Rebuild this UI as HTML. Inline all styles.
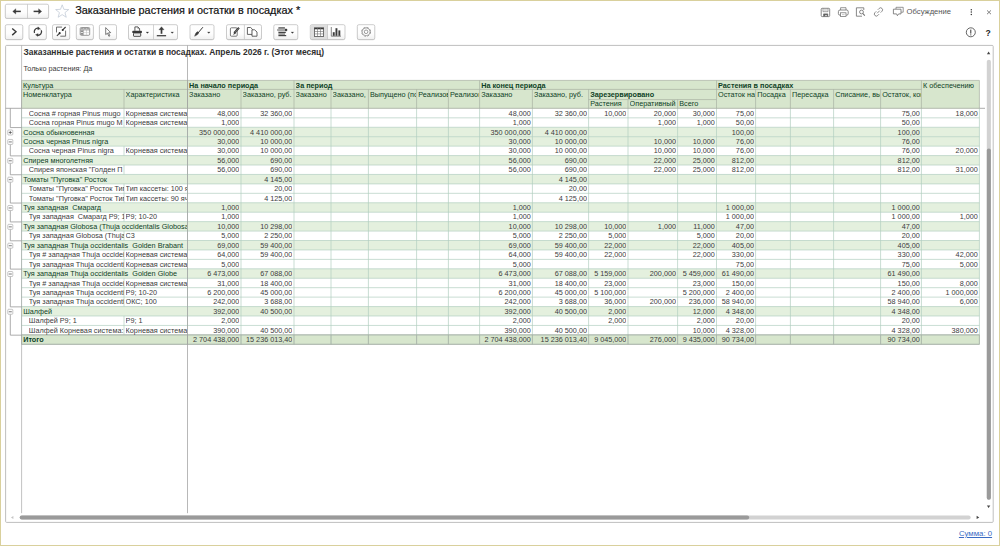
<!DOCTYPE html>
<html lang="ru"><head><meta charset="utf-8"><title>Заказанные растения и остатки в посадках</title>
<style>
html,body{margin:0;padding:0;background:#fff;}
body{width:1000px;height:546px;position:relative;overflow:hidden;font-family:"Liberation Sans",sans-serif;}
#frame{position:absolute;left:0;top:0;width:998px;height:544px;border:1px solid #d9d09c;}
svg{position:absolute;left:0;top:0;}
.t{position:absolute;white-space:pre;overflow:hidden;font-size:7.25px;line-height:8.2px;color:#3c3c3c;}
.t.g{color:#0e4226;}
.t.hd{color:#0e4226;}
.t.b{font-weight:bold;}
.t.r{text-align:right;}
.x{position:absolute;white-space:pre;}
</style></head><body>
<div id="frame"></div>
<svg width="1000" height="546" viewBox="0 0 1000 546">
<defs><linearGradient id="bg" x1="0" y1="0" x2="0" y2="1"><stop offset="0" stop-color="#ffffff"/><stop offset="0.6" stop-color="#fdfdfd"/><stop offset="1" stop-color="#f0f0f0"/></linearGradient></defs>
<rect x="5.30" y="4.90" width="43.30" height="14.20" rx="1.6" fill="#d6d6d6"/>
<rect x="5.30" y="4.20" width="43.30" height="14.20" rx="1.6" fill="url(#bg)" stroke="#c0c0c0" stroke-width="0.8"/>
<line x1="27.50" y1="4.20" x2="27.50" y2="18.40" stroke="#c0c0c0" stroke-width="0.7"/>
<rect x="5.30" y="25.40" width="17.50" height="14.80" rx="1.6" fill="#d6d6d6"/>
<rect x="5.30" y="24.70" width="17.50" height="14.80" rx="1.6" fill="url(#bg)" stroke="#c0c0c0" stroke-width="0.8"/>
<rect x="29.00" y="25.40" width="17.30" height="14.80" rx="1.6" fill="#d6d6d6"/>
<rect x="29.00" y="24.70" width="17.30" height="14.80" rx="1.6" fill="url(#bg)" stroke="#c0c0c0" stroke-width="0.8"/>
<rect x="52.50" y="25.40" width="17.20" height="14.80" rx="1.6" fill="#d6d6d6"/>
<rect x="52.50" y="24.70" width="17.20" height="14.80" rx="1.6" fill="url(#bg)" stroke="#c0c0c0" stroke-width="0.8"/>
<rect x="76.30" y="25.40" width="17.10" height="14.80" rx="1.6" fill="#d6d6d6"/>
<rect x="76.30" y="24.70" width="17.10" height="14.80" rx="1.6" fill="url(#bg)" stroke="#c0c0c0" stroke-width="0.8"/>
<rect x="99.40" y="25.40" width="17.10" height="14.80" rx="1.6" fill="#d6d6d6"/>
<rect x="99.40" y="24.70" width="17.10" height="14.80" rx="1.6" fill="url(#bg)" stroke="#c0c0c0" stroke-width="0.8"/>
<rect x="128.50" y="25.40" width="49.00" height="14.80" rx="1.6" fill="#d6d6d6"/>
<rect x="128.50" y="24.70" width="49.00" height="14.80" rx="1.6" fill="url(#bg)" stroke="#c0c0c0" stroke-width="0.8"/>
<line x1="153.50" y1="24.70" x2="153.50" y2="39.50" stroke="#c0c0c0" stroke-width="0.7"/>
<rect x="190.00" y="25.40" width="24.00" height="14.80" rx="1.6" fill="#d6d6d6"/>
<rect x="190.00" y="24.70" width="24.00" height="14.80" rx="1.6" fill="url(#bg)" stroke="#c0c0c0" stroke-width="0.8"/>
<rect x="226.50" y="25.40" width="35.00" height="14.80" rx="1.6" fill="#d6d6d6"/>
<rect x="226.50" y="24.70" width="35.00" height="14.80" rx="1.6" fill="url(#bg)" stroke="#c0c0c0" stroke-width="0.8"/>
<line x1="244.40" y1="24.70" x2="244.40" y2="39.50" stroke="#c0c0c0" stroke-width="0.7"/>
<rect x="273.80" y="25.40" width="24.00" height="14.80" rx="1.6" fill="#d6d6d6"/>
<rect x="273.80" y="24.70" width="24.00" height="14.80" rx="1.6" fill="url(#bg)" stroke="#c0c0c0" stroke-width="0.8"/>
<rect x="310.30" y="25.40" width="34.70" height="14.80" rx="1.6" fill="#d6d6d6"/>
<rect x="310.30" y="24.70" width="34.70" height="14.80" rx="1.6" fill="url(#bg)" stroke="#c0c0c0" stroke-width="0.8"/>
<rect x="310.70" y="25.10" width="16.80" height="14.00" rx="1.2" fill="#dedede"/>
<line x1="327.50" y1="24.70" x2="327.50" y2="39.50" stroke="#c0c0c0" stroke-width="0.7"/>
<rect x="357.30" y="25.40" width="17.50" height="14.80" rx="1.6" fill="#d6d6d6"/>
<rect x="357.30" y="24.70" width="17.50" height="14.80" rx="1.6" fill="url(#bg)" stroke="#c0c0c0" stroke-width="0.8"/>
<path d="M20.8 11.4 H15" stroke="#3a3a3a" stroke-width="1.5" fill="none" />
<path d="M15.8 8.7 L12.7 11.4 L15.8 14.1 Z" stroke="#3a3a3a" stroke-width="0.3" fill="#3a3a3a" />
<path d="M33.6 11.4 H39.4" stroke="#3a3a3a" stroke-width="1.5" fill="none" />
<path d="M38.6 8.7 L41.7 11.4 L38.6 14.1 Z" stroke="#3a3a3a" stroke-width="0.3" fill="#3a3a3a" />
<polygon points="62.20,4.80 63.90,9.35 68.76,9.57 64.96,12.60 66.26,17.28 62.20,14.60 58.14,17.28 59.44,12.60 55.64,9.57 60.50,9.35" fill="#fff" stroke="#bcc6d2" stroke-width="0.7"/>
<path d="M12.2 28.5 L16 31.8 L12.2 35.1" stroke="#3a3a3a" stroke-width="1.4" fill="none" />
<path d="M34.5 33.1 A3.55 3.55 0 0 1 38.3 28.2" stroke="#3a3a3a" stroke-width="1.3" fill="none" />
<path d="M41.3 30.3 A3.55 3.55 0 0 1 37.5 35.2" stroke="#3a3a3a" stroke-width="1.3" fill="none" />
<path d="M37.9 26.8 L40.4 28.7 L37.7 30 Z" stroke="#3a3a3a" stroke-width="0.2" fill="#3a3a3a" />
<path d="M37.9 36.6 L35.4 34.7 L38.1 33.4 Z" stroke="#3a3a3a" stroke-width="0.2" fill="#3a3a3a" />
<path d="M39.8 28.9 A3.55 3.55 0 0 1 41.2 30.2" stroke="#b0b0b0" stroke-width="1.0" fill="none" />
<path d="M56.5 32.4 V27.1 H62.1 M60.3 36.2 H65.6 V30.6" stroke="#5e5e5e" stroke-width="0.9" fill="none" />
<path d="M65.6 27 L63 29.7" stroke="#3a3a3a" stroke-width="1.1" fill="none" />
<path d="M56.9 35.8 L59.5 33.3" stroke="#3a3a3a" stroke-width="1.1" fill="none" />
<circle cx="62.75" cy="30" r="1.05" fill="#262626"/>
<circle cx="59.65" cy="33.15" r="1.05" fill="#262626"/>
<rect x="80.2" y="27.5" width="9.5" height="7.8" rx="1.1" fill="#fff" stroke="#767676" stroke-width="0.75"/>
<path d="M80.8 28.75 H89.2" stroke="#a2a2a2" stroke-width="1.5" fill="none" />
<path d="M83.6 28 V29.5 M86.6 28 V29.5" stroke="#e0e0e0" stroke-width="0.5" fill="none" />
<rect x="80.7" y="30.4" width="2.3" height="1.8" fill="#8c8c8c"/>
<rect x="80.7" y="33" width="2.3" height="1.8" fill="#8c8c8c"/>
<path d="M86.5 30 V35.1 M83.4 32.6 H89.5" stroke="#c6c6c6" stroke-width="0.6" fill="none" />
<path d="M80.3 30 H89.6 M83.4 29.8 V35.2" stroke="#8a8a8a" stroke-width="0.6" fill="none" />
<path d="M105.7 27.6 L105.7 34.6 L107.4 33.2 L108.9 36.3 L109.9 35.8 L108.5 32.8 L110.7 32.6 Z" stroke="#444" stroke-width="0.7" fill="#fff" />
<path d="M134.9 30.8 V26.9 H137.8 L139.6 28.6 V30.8" stroke="#333" stroke-width="0.8" fill="#fff" />
<path d="M137.8 26.9 V28.6 H139.6" stroke="#555" stroke-width="0.5" fill="none" />
<rect x="132.3" y="30.7" width="9.6" height="2.4" rx="0.7" fill="#383838"/>
<rect x="133.5" y="33" width="7.2" height="3.3" rx="0.5" fill="#fff" stroke="#333" stroke-width="0.9"/>
<path d="M134.4 34.8 H139.8" stroke="#bbb" stroke-width="0.6" fill="none" />
<path d="M146.05 31.900000000000002 H148.75 L147.4 33.4 Z" stroke="#3a3a3a" stroke-width="0.2" fill="#3a3a3a" />
<path d="M170.85 31.900000000000002 H173.54999999999998 L172.2 33.4 Z" stroke="#3a3a3a" stroke-width="0.2" fill="#3a3a3a" />
<path d="M207.45000000000002 31.900000000000002 H210.15 L208.8 33.4 Z" stroke="#3a3a3a" stroke-width="0.2" fill="#3a3a3a" />
<path d="M291.04999999999995 31.900000000000002 H293.75 L292.4 33.4 Z" stroke="#3a3a3a" stroke-width="0.2" fill="#3a3a3a" />
<path d="M161.5 33.8 V29" stroke="#3a3a3a" stroke-width="1.7" fill="none" />
<path d="M158.9 29.8 L161.5 26.7 L164.1 29.8 Z" stroke="#3a3a3a" stroke-width="0.3" fill="#3a3a3a" />
<path d="M156.8 35.7 H166.1" stroke="#444" stroke-width="1.3" fill="none" />
<path d="M202.9 27.2 L198 33" stroke="#3a3a3a" stroke-width="1.0" fill="none" />
<path d="M198.9 32.6 C198.4 34.6 196.6 35.6 194.5 36.3 C195.2 34.6 195.6 32.6 197.5 31.6 Z" stroke="#3a3a3a" stroke-width="0.3" fill="#3a3a3a" />
<rect x="230.4" y="27.8" width="6.8" height="8.4" rx="1" fill="#fff" stroke="#555" stroke-width="0.8"/>
<path d="M239 27.8 L234.2 33" stroke="#3a3a3a" stroke-width="2.0" fill="none" />
<path d="M234.6 32.4 L233.4 34.6 L235.6 33.6 Z" stroke="#3a3a3a" stroke-width="0.3" fill="#3a3a3a" />
<path d="M238.6 28.4 L235 32.2" stroke="#aaa" stroke-width="0.5" fill="none" />
<path d="M247.4 27.5 H250.6 L252.4 29.2 V34.4 H247.4 Z" stroke="#484848" stroke-width="0.85" fill="#fff" />
<path d="M252 29.8 H254.6 L257 32 V36.2 H252 Z" stroke="#484848" stroke-width="0.85" fill="#fff" />
<path d="M278.4 27.9 H284.9" stroke="#444" stroke-width="1.2" fill="none" />
<rect x="277.5" y="28.9" width="9.6" height="2.1" rx="0.8" fill="#b8b8b8" stroke="#6a6a6a" stroke-width="0.5"/>
<rect x="285" y="29.1" width="2" height="1.7" fill="#2e2e2e"/>
<path d="M278.4 32.5 H285.8" stroke="#444" stroke-width="1.2" fill="none" />
<path d="M278.4 34.05 H285" stroke="#6a6a6a" stroke-width="1.2" fill="none" />
<path d="M278.4 35.6 H286.2" stroke="#444" stroke-width="1.2" fill="none" />
<rect x="314.4" y="27.8" width="9.2" height="8.6" fill="#fff" stroke="#505050" stroke-width="0.8"/>
<path d="M314.4 28.6 H323.6" stroke="#3a3a3a" stroke-width="1.4" fill="none" />
<path d="M314.4 31.5 H323.6 M314.4 33.9 H323.6 M317.5 28 V36.4 M320.5 28 V36.4" stroke="#707070" stroke-width="0.6" fill="none" />
<path d="M331.3 27 V36.2 H341" stroke="#555" stroke-width="0.7" fill="none" />
<rect x="332.8" y="32.2" width="1.9" height="3.6" fill="#3c3c3c"/>
<rect x="335.5" y="28.2" width="1.9" height="7.6" fill="#3c3c3c"/>
<rect x="338.4" y="30.4" width="1.9" height="5.4" fill="#3c3c3c"/>
<circle cx="366.1" cy="31.8" r="4.4" fill="none" stroke="#707070" stroke-width="0.8" stroke-dasharray="2.25 1.2"/>
<circle cx="366.1" cy="31.8" r="3.9" fill="#fff" stroke="#777" stroke-width="0.6"/>
<circle cx="366.1" cy="31.8" r="1.8" fill="none" stroke="#707070" stroke-width="0.7"/>
<rect x="821.2" y="8.3" width="8.5" height="8.3" rx="1" fill="#fff" stroke="#6a6a6a" stroke-width="0.8"/>
<path d="M823 8.5 V11.7 H828 V8.5" stroke="#6a6a6a" stroke-width="0.6" fill="none" />
<path d="M824.4 8.8 V11.2 M825.6 8.8 V11.2 M826.8 8.8 V11.2" stroke="#aaa" stroke-width="0.5" fill="none" />
<path d="M823.6 16.4 V13.9 H827.8 V16.4" stroke="#555" stroke-width="0.6" fill="#666" />
<path d="M825.4 15 H826.6 V16 H825.4 Z" stroke="#fff" stroke-width="0.1" fill="#fff" />
<path d="M840.6 10 V7.7 H846 V10" stroke="#6a6a6a" stroke-width="0.7" fill="none" />
<rect x="838.4" y="10" width="9.8" height="5.2" rx="1.6" fill="#fff" stroke="#6a6a6a" stroke-width="0.8"/>
<rect x="840.6" y="12.8" width="5.4" height="3.7" fill="#fff" stroke="#6a6a6a" stroke-width="0.7"/>
<path d="M842 14.6 H844.6" stroke="#999" stroke-width="0.5" fill="none" />
<path d="M863.8 10 V7.8 H856.4 V16.2 H862" stroke="#6a6a6a" stroke-width="0.8" fill="none" />
<circle cx="861.5" cy="12" r="1.9" fill="#fff" stroke="#6a6a6a" stroke-width="0.8"/>
<path d="M862.9 13.5 L864.8 15.7" stroke="#6a6a6a" stroke-width="1.1" fill="none" />
<g transform="translate(878.45 11.95) rotate(-45)" fill="none" stroke="#777" stroke-width="0.8"><path d="M1.1 -2 H3 A2 2 0 0 1 3 2 H1.1"/><path d="M-1.1 -2 H-3 A2 2 0 0 0 -3 2 H-1.1"/><path d="M-1.8 0 H1.8"/></g>
<path d="M896 9 V7.3 H903.2 V12.2 H901.2" stroke="#6a6a6a" stroke-width="0.7" fill="none" />
<path d="M893.4 9.2 H901 V13.9 H898.6 L897.4 15.7 L896.6 13.9 H893.4 Z" stroke="#6a6a6a" stroke-width="0.8" fill="#fff" />
<circle cx="971.3" cy="9.8" r="0.75" fill="#3a3a3a"/>
<circle cx="971.3" cy="12.1" r="0.75" fill="#3a3a3a"/>
<circle cx="971.3" cy="14.4" r="0.75" fill="#3a3a3a"/>
<path d="M987 10.4 L991 14.2 M991 10.4 L987 14.2" stroke="#6a6a6a" stroke-width="0.85" fill="none" />
<circle cx="970.8" cy="32.3" r="4.5" fill="#fff" stroke="#333" stroke-width="0.75"/>
<path d="M970.8 29.6 V33.6" stroke="#333" stroke-width="1.0" fill="none" />
<path d="M970.8 34.4 V35.4" stroke="#333" stroke-width="1.0" fill="none" />
<rect x="21.50" y="80.40" width="957.90" height="27.90" fill="#d7e6cd" />
<rect x="21.50" y="127.27" width="957.90" height="9.44" fill="#e4f0de" />
<rect x="21.50" y="136.71" width="957.90" height="9.44" fill="#e4f0de" />
<rect x="21.50" y="155.58" width="957.90" height="9.44" fill="#e4f0de" />
<rect x="21.50" y="174.45" width="957.90" height="9.44" fill="#e4f0de" />
<rect x="21.50" y="202.76" width="957.90" height="9.44" fill="#e4f0de" />
<rect x="21.50" y="221.63" width="957.90" height="9.44" fill="#e4f0de" />
<rect x="21.50" y="240.50" width="957.90" height="9.44" fill="#e4f0de" />
<rect x="21.50" y="268.81" width="957.90" height="9.44" fill="#e4f0de" />
<rect x="21.50" y="306.56" width="957.90" height="9.44" fill="#e4f0de" />
<rect x="21.50" y="334.86" width="957.90" height="9.44" fill="#d7e6cd" />
<line x1="21.50" y1="117.84" x2="979.40" y2="117.84" stroke="#b2cfc0" stroke-width="0.7" />
<line x1="21.50" y1="127.27" x2="979.40" y2="127.27" stroke="#b2cfc0" stroke-width="0.7" />
<line x1="21.50" y1="136.71" x2="979.40" y2="136.71" stroke="#b2cfc0" stroke-width="0.7" />
<line x1="21.50" y1="146.14" x2="979.40" y2="146.14" stroke="#b2cfc0" stroke-width="0.7" />
<line x1="21.50" y1="155.58" x2="979.40" y2="155.58" stroke="#b2cfc0" stroke-width="0.7" />
<line x1="21.50" y1="165.02" x2="979.40" y2="165.02" stroke="#b2cfc0" stroke-width="0.7" />
<line x1="21.50" y1="174.45" x2="979.40" y2="174.45" stroke="#b2cfc0" stroke-width="0.7" />
<line x1="21.50" y1="183.89" x2="979.40" y2="183.89" stroke="#b2cfc0" stroke-width="0.7" />
<line x1="21.50" y1="193.32" x2="979.40" y2="193.32" stroke="#b2cfc0" stroke-width="0.7" />
<line x1="21.50" y1="202.76" x2="979.40" y2="202.76" stroke="#b2cfc0" stroke-width="0.7" />
<line x1="21.50" y1="212.20" x2="979.40" y2="212.20" stroke="#b2cfc0" stroke-width="0.7" />
<line x1="21.50" y1="221.63" x2="979.40" y2="221.63" stroke="#b2cfc0" stroke-width="0.7" />
<line x1="21.50" y1="231.07" x2="979.40" y2="231.07" stroke="#b2cfc0" stroke-width="0.7" />
<line x1="21.50" y1="240.50" x2="979.40" y2="240.50" stroke="#b2cfc0" stroke-width="0.7" />
<line x1="21.50" y1="249.94" x2="979.40" y2="249.94" stroke="#b2cfc0" stroke-width="0.7" />
<line x1="21.50" y1="259.38" x2="979.40" y2="259.38" stroke="#b2cfc0" stroke-width="0.7" />
<line x1="21.50" y1="268.81" x2="979.40" y2="268.81" stroke="#b2cfc0" stroke-width="0.7" />
<line x1="21.50" y1="278.25" x2="979.40" y2="278.25" stroke="#b2cfc0" stroke-width="0.7" />
<line x1="21.50" y1="287.68" x2="979.40" y2="287.68" stroke="#b2cfc0" stroke-width="0.7" />
<line x1="21.50" y1="297.12" x2="979.40" y2="297.12" stroke="#b2cfc0" stroke-width="0.7" />
<line x1="21.50" y1="306.56" x2="979.40" y2="306.56" stroke="#b2cfc0" stroke-width="0.7" />
<line x1="21.50" y1="315.99" x2="979.40" y2="315.99" stroke="#b2cfc0" stroke-width="0.7" />
<line x1="21.50" y1="325.43" x2="979.40" y2="325.43" stroke="#b2cfc0" stroke-width="0.7" />
<line x1="21.50" y1="334.86" x2="979.40" y2="334.86" stroke="#b2cfc0" stroke-width="0.7" />
<line x1="21.50" y1="344.30" x2="979.40" y2="344.30" stroke="#b2cfc0" stroke-width="0.7" />
<line x1="21.50" y1="108.30" x2="21.50" y2="344.30" stroke="#b2cfc0" stroke-width="0.7" />
<line x1="124.00" y1="108.40" x2="124.00" y2="117.84" stroke="#b2cfc0" stroke-width="0.7" />
<line x1="124.00" y1="117.84" x2="124.00" y2="127.27" stroke="#b2cfc0" stroke-width="0.7" />
<line x1="124.00" y1="146.14" x2="124.00" y2="155.58" stroke="#b2cfc0" stroke-width="0.7" />
<line x1="124.00" y1="165.02" x2="124.00" y2="174.45" stroke="#b2cfc0" stroke-width="0.7" />
<line x1="124.00" y1="183.89" x2="124.00" y2="193.32" stroke="#b2cfc0" stroke-width="0.7" />
<line x1="124.00" y1="193.32" x2="124.00" y2="202.76" stroke="#b2cfc0" stroke-width="0.7" />
<line x1="124.00" y1="212.20" x2="124.00" y2="221.63" stroke="#b2cfc0" stroke-width="0.7" />
<line x1="124.00" y1="231.07" x2="124.00" y2="240.50" stroke="#b2cfc0" stroke-width="0.7" />
<line x1="124.00" y1="249.94" x2="124.00" y2="259.38" stroke="#b2cfc0" stroke-width="0.7" />
<line x1="124.00" y1="259.38" x2="124.00" y2="268.81" stroke="#b2cfc0" stroke-width="0.7" />
<line x1="124.00" y1="278.25" x2="124.00" y2="287.68" stroke="#b2cfc0" stroke-width="0.7" />
<line x1="124.00" y1="287.68" x2="124.00" y2="297.12" stroke="#b2cfc0" stroke-width="0.7" />
<line x1="124.00" y1="297.12" x2="124.00" y2="306.56" stroke="#b2cfc0" stroke-width="0.7" />
<line x1="124.00" y1="315.99" x2="124.00" y2="325.43" stroke="#b2cfc0" stroke-width="0.7" />
<line x1="124.00" y1="325.43" x2="124.00" y2="334.86" stroke="#b2cfc0" stroke-width="0.7" />
<line x1="187.50" y1="108.30" x2="187.50" y2="344.30" stroke="#b2cfc0" stroke-width="0.7" />
<line x1="241.00" y1="108.30" x2="241.00" y2="344.30" stroke="#b2cfc0" stroke-width="0.7" />
<line x1="294.00" y1="108.30" x2="294.00" y2="344.30" stroke="#b2cfc0" stroke-width="0.7" />
<line x1="331.00" y1="108.30" x2="331.00" y2="344.30" stroke="#b2cfc0" stroke-width="0.7" />
<line x1="368.40" y1="108.30" x2="368.40" y2="344.30" stroke="#b2cfc0" stroke-width="0.7" />
<line x1="416.60" y1="108.30" x2="416.60" y2="344.30" stroke="#b2cfc0" stroke-width="0.7" />
<line x1="448.40" y1="108.30" x2="448.40" y2="344.30" stroke="#b2cfc0" stroke-width="0.7" />
<line x1="479.60" y1="108.30" x2="479.60" y2="344.30" stroke="#b2cfc0" stroke-width="0.7" />
<line x1="532.40" y1="108.30" x2="532.40" y2="344.30" stroke="#b2cfc0" stroke-width="0.7" />
<line x1="588.60" y1="108.30" x2="588.60" y2="344.30" stroke="#b2cfc0" stroke-width="0.7" />
<line x1="628.00" y1="108.30" x2="628.00" y2="344.30" stroke="#b2cfc0" stroke-width="0.7" />
<line x1="677.60" y1="108.30" x2="677.60" y2="344.30" stroke="#b2cfc0" stroke-width="0.7" />
<line x1="716.50" y1="108.30" x2="716.50" y2="344.30" stroke="#b2cfc0" stroke-width="0.7" />
<line x1="755.60" y1="108.30" x2="755.60" y2="344.30" stroke="#b2cfc0" stroke-width="0.7" />
<line x1="790.40" y1="108.30" x2="790.40" y2="344.30" stroke="#b2cfc0" stroke-width="0.7" />
<line x1="833.60" y1="108.30" x2="833.60" y2="344.30" stroke="#b2cfc0" stroke-width="0.7" />
<line x1="880.60" y1="108.30" x2="880.60" y2="344.30" stroke="#b2cfc0" stroke-width="0.7" />
<line x1="921.40" y1="108.30" x2="921.40" y2="344.30" stroke="#b2cfc0" stroke-width="0.7" />
<line x1="979.40" y1="108.30" x2="979.40" y2="344.30" stroke="#b2cfc0" stroke-width="0.7" />
<line x1="21.50" y1="334.86" x2="979.40" y2="334.86" stroke="#a9ada6" stroke-width="0.85" />
<line x1="21.50" y1="344.30" x2="979.40" y2="344.30" stroke="#a9ada6" stroke-width="0.85" />
<line x1="21.50" y1="334.86" x2="21.50" y2="344.30" stroke="#a9b0a6" stroke-width="0.75" />
<line x1="187.50" y1="334.86" x2="187.50" y2="344.30" stroke="#a9b0a6" stroke-width="0.75" />
<line x1="241.00" y1="334.86" x2="241.00" y2="344.30" stroke="#a9b0a6" stroke-width="0.75" />
<line x1="294.00" y1="334.86" x2="294.00" y2="344.30" stroke="#a9b0a6" stroke-width="0.75" />
<line x1="331.00" y1="334.86" x2="331.00" y2="344.30" stroke="#a9b0a6" stroke-width="0.75" />
<line x1="368.40" y1="334.86" x2="368.40" y2="344.30" stroke="#a9b0a6" stroke-width="0.75" />
<line x1="416.60" y1="334.86" x2="416.60" y2="344.30" stroke="#a9b0a6" stroke-width="0.75" />
<line x1="448.40" y1="334.86" x2="448.40" y2="344.30" stroke="#a9b0a6" stroke-width="0.75" />
<line x1="479.60" y1="334.86" x2="479.60" y2="344.30" stroke="#a9b0a6" stroke-width="0.75" />
<line x1="532.40" y1="334.86" x2="532.40" y2="344.30" stroke="#a9b0a6" stroke-width="0.75" />
<line x1="588.60" y1="334.86" x2="588.60" y2="344.30" stroke="#a9b0a6" stroke-width="0.75" />
<line x1="628.00" y1="334.86" x2="628.00" y2="344.30" stroke="#a9b0a6" stroke-width="0.75" />
<line x1="677.60" y1="334.86" x2="677.60" y2="344.30" stroke="#a9b0a6" stroke-width="0.75" />
<line x1="716.50" y1="334.86" x2="716.50" y2="344.30" stroke="#a9b0a6" stroke-width="0.75" />
<line x1="755.60" y1="334.86" x2="755.60" y2="344.30" stroke="#a9b0a6" stroke-width="0.75" />
<line x1="790.40" y1="334.86" x2="790.40" y2="344.30" stroke="#a9b0a6" stroke-width="0.75" />
<line x1="833.60" y1="334.86" x2="833.60" y2="344.30" stroke="#a9b0a6" stroke-width="0.75" />
<line x1="880.60" y1="334.86" x2="880.60" y2="344.30" stroke="#a9b0a6" stroke-width="0.75" />
<line x1="921.40" y1="334.86" x2="921.40" y2="344.30" stroke="#a9b0a6" stroke-width="0.75" />
<line x1="979.40" y1="334.86" x2="979.40" y2="344.30" stroke="#a9b0a6" stroke-width="0.75" />
<line x1="21.50" y1="80.40" x2="979.40" y2="80.40" stroke="#a9b2a4" stroke-width="0.7" />
<line x1="21.50" y1="89.40" x2="921.40" y2="89.40" stroke="#a9b2a4" stroke-width="0.7" />
<line x1="588.60" y1="99.55" x2="716.50" y2="99.55" stroke="#a9b2a4" stroke-width="0.7" />
<line x1="21.50" y1="80.40" x2="21.50" y2="108.30" stroke="#a9b2a4" stroke-width="0.7" />
<line x1="979.40" y1="80.40" x2="979.40" y2="108.30" stroke="#a9b2a4" stroke-width="0.7" />
<line x1="187.50" y1="80.40" x2="187.50" y2="108.30" stroke="#a9b2a4" stroke-width="0.7" />
<line x1="294.00" y1="80.40" x2="294.00" y2="108.30" stroke="#a9b2a4" stroke-width="0.7" />
<line x1="479.60" y1="80.40" x2="479.60" y2="108.30" stroke="#a9b2a4" stroke-width="0.7" />
<line x1="716.50" y1="80.40" x2="716.50" y2="108.30" stroke="#a9b2a4" stroke-width="0.7" />
<line x1="921.40" y1="80.40" x2="921.40" y2="108.30" stroke="#a9b2a4" stroke-width="0.7" />
<line x1="124.00" y1="89.40" x2="124.00" y2="108.30" stroke="#a9b2a4" stroke-width="0.7" />
<line x1="241.00" y1="89.40" x2="241.00" y2="108.30" stroke="#a9b2a4" stroke-width="0.7" />
<line x1="331.00" y1="89.40" x2="331.00" y2="108.30" stroke="#a9b2a4" stroke-width="0.7" />
<line x1="368.40" y1="89.40" x2="368.40" y2="108.30" stroke="#a9b2a4" stroke-width="0.7" />
<line x1="416.60" y1="89.40" x2="416.60" y2="108.30" stroke="#a9b2a4" stroke-width="0.7" />
<line x1="448.40" y1="89.40" x2="448.40" y2="108.30" stroke="#a9b2a4" stroke-width="0.7" />
<line x1="532.40" y1="89.40" x2="532.40" y2="108.30" stroke="#a9b2a4" stroke-width="0.7" />
<line x1="588.60" y1="89.40" x2="588.60" y2="108.30" stroke="#a9b2a4" stroke-width="0.7" />
<line x1="755.60" y1="89.40" x2="755.60" y2="108.30" stroke="#a9b2a4" stroke-width="0.7" />
<line x1="790.40" y1="89.40" x2="790.40" y2="108.30" stroke="#a9b2a4" stroke-width="0.7" />
<line x1="833.60" y1="89.40" x2="833.60" y2="108.30" stroke="#a9b2a4" stroke-width="0.7" />
<line x1="880.60" y1="89.40" x2="880.60" y2="108.30" stroke="#a9b2a4" stroke-width="0.7" />
<line x1="628.00" y1="99.55" x2="628.00" y2="108.30" stroke="#a9b2a4" stroke-width="0.7" />
<line x1="677.60" y1="99.55" x2="677.60" y2="108.30" stroke="#a9b2a4" stroke-width="0.7" />
<rect x="5.6" y="45.4" width="987.6" height="477.0" fill="none" stroke="#b4b4b4" stroke-width="0.85" rx="1"/>
<line x1="21.60" y1="45.40" x2="21.60" y2="513.20" stroke="#a8a8a8" stroke-width="0.7" />
<line x1="187.50" y1="45.40" x2="187.50" y2="513.20" stroke="#a0a0a0" stroke-width="0.75" />
<line x1="5.60" y1="108.30" x2="21.50" y2="108.30" stroke="#989898" stroke-width="0.8" />
<line x1="979.40" y1="108.30" x2="985.00" y2="108.30" stroke="#989898" stroke-width="0.8" />
<line x1="21.50" y1="108.30" x2="979.40" y2="108.30" stroke="#a3aa9e" stroke-width="0.8" />
<line x1="10.30" y1="108.30" x2="10.30" y2="127.57" stroke="#989898" stroke-width="0.8" />
<line x1="10.30" y1="127.57" x2="21.60" y2="127.57" stroke="#989898" stroke-width="0.8" />
<rect x="7.80" y="129.99" width="5" height="5" rx="0.8" fill="#fff" stroke="#a0a0a0" stroke-width="0.6"/>
<line x1="8.80" y1="132.49" x2="11.80" y2="132.49" stroke="#444" stroke-width="0.7" />
<line x1="10.30" y1="130.99" x2="10.30" y2="133.99" stroke="#444" stroke-width="0.7" />
<line x1="10.30" y1="144.43" x2="10.30" y2="155.88" stroke="#989898" stroke-width="0.8" />
<line x1="10.30" y1="155.88" x2="21.60" y2="155.88" stroke="#989898" stroke-width="0.8" />
<rect x="7.80" y="139.43" width="5" height="5" rx="0.8" fill="#fff" stroke="#a0a0a0" stroke-width="0.6"/>
<line x1="8.80" y1="141.93" x2="11.80" y2="141.93" stroke="#444" stroke-width="0.7" />
<line x1="10.30" y1="163.30" x2="10.30" y2="174.75" stroke="#989898" stroke-width="0.8" />
<line x1="10.30" y1="174.75" x2="21.60" y2="174.75" stroke="#989898" stroke-width="0.8" />
<rect x="7.80" y="158.30" width="5" height="5" rx="0.8" fill="#fff" stroke="#a0a0a0" stroke-width="0.6"/>
<line x1="8.80" y1="160.80" x2="11.80" y2="160.80" stroke="#444" stroke-width="0.7" />
<line x1="10.30" y1="182.17" x2="10.30" y2="203.06" stroke="#989898" stroke-width="0.8" />
<line x1="10.30" y1="203.06" x2="21.60" y2="203.06" stroke="#989898" stroke-width="0.8" />
<rect x="7.80" y="177.17" width="5" height="5" rx="0.8" fill="#fff" stroke="#a0a0a0" stroke-width="0.6"/>
<line x1="8.80" y1="179.67" x2="11.80" y2="179.67" stroke="#444" stroke-width="0.7" />
<line x1="10.30" y1="210.48" x2="10.30" y2="221.93" stroke="#989898" stroke-width="0.8" />
<line x1="10.30" y1="221.93" x2="21.60" y2="221.93" stroke="#989898" stroke-width="0.8" />
<rect x="7.80" y="205.48" width="5" height="5" rx="0.8" fill="#fff" stroke="#a0a0a0" stroke-width="0.6"/>
<line x1="8.80" y1="207.98" x2="11.80" y2="207.98" stroke="#444" stroke-width="0.7" />
<line x1="10.30" y1="229.35" x2="10.30" y2="240.80" stroke="#989898" stroke-width="0.8" />
<line x1="10.30" y1="240.80" x2="21.60" y2="240.80" stroke="#989898" stroke-width="0.8" />
<rect x="7.80" y="224.35" width="5" height="5" rx="0.8" fill="#fff" stroke="#a0a0a0" stroke-width="0.6"/>
<line x1="8.80" y1="226.85" x2="11.80" y2="226.85" stroke="#444" stroke-width="0.7" />
<line x1="10.30" y1="248.22" x2="10.30" y2="269.11" stroke="#989898" stroke-width="0.8" />
<line x1="10.30" y1="269.11" x2="21.60" y2="269.11" stroke="#989898" stroke-width="0.8" />
<rect x="7.80" y="243.22" width="5" height="5" rx="0.8" fill="#fff" stroke="#a0a0a0" stroke-width="0.6"/>
<line x1="8.80" y1="245.72" x2="11.80" y2="245.72" stroke="#444" stroke-width="0.7" />
<line x1="10.30" y1="276.53" x2="10.30" y2="306.86" stroke="#989898" stroke-width="0.8" />
<line x1="10.30" y1="306.86" x2="21.60" y2="306.86" stroke="#989898" stroke-width="0.8" />
<rect x="7.80" y="271.53" width="5" height="5" rx="0.8" fill="#fff" stroke="#a0a0a0" stroke-width="0.6"/>
<line x1="8.80" y1="274.03" x2="11.80" y2="274.03" stroke="#444" stroke-width="0.7" />
<line x1="10.30" y1="314.27" x2="10.30" y2="335.16" stroke="#989898" stroke-width="0.8" />
<line x1="10.30" y1="335.16" x2="21.60" y2="335.16" stroke="#989898" stroke-width="0.8" />
<rect x="7.80" y="309.27" width="5" height="5" rx="0.8" fill="#fff" stroke="#a0a0a0" stroke-width="0.6"/>
<line x1="8.80" y1="311.77" x2="11.80" y2="311.77" stroke="#444" stroke-width="0.7" />
<rect x="986.8" y="59.8" width="4.1" height="440" rx="2.05" fill="#d2d2d2"/>
<rect x="986.8" y="148.5" width="4.1" height="351.2" rx="2.05" fill="#9a9a9a"/>
<path d="M986.9 54.3 L990.3 54.3 L988.6 51.6 Z" fill="#444"/>
<path d="M986.9 505.4 L990.3 505.4 L988.6 508.1 Z" fill="#444"/>
<rect x="19.7" y="515.5" width="951" height="4.1" rx="2.05" fill="#d2d2d2"/>
<rect x="19.7" y="515.5" width="729.5" height="4.1" rx="2.05" fill="#9a9a9a"/>
<path d="M13.4 515.9 L13.4 519.1 L10.9 517.5 Z" fill="#c4c4c4"/>
<path d="M976.6 515.7 L976.6 519.1 L979.3 517.4 Z" fill="#444"/>
</svg>
<div class="x" style="left:75.2px;top:3.4px;font-size:10.87px;line-height:14px;color:#111;-webkit-text-stroke:0.2px #111;">Заказанные растения и остатки в посадках *</div>
<div class="x" style="left:906.6px;top:6.7px;font-size:7.65px;line-height:10px;color:#555;">Обсуждение</div>
<div class="x" style="left:985.5px;top:28px;font-size:8.6px;line-height:10px;font-weight:bold;color:#222;">?</div>
<div class="x" style="left:958.9px;top:528.6px;font-size:7.8px;line-height:10px;color:#3a6bc4;text-decoration:underline;text-decoration-thickness:0.6px;text-underline-offset:0.9px;">Сумма: 0</div>
<div class="x" style="left:23.6px;top:46.5px;font-size:8.43px;line-height:10px;font-weight:bold;color:#2e2e2e;">Заказанные растения и остатки в посадках. Апрель 2026 г. (Этот месяц)</div>
<div class="x" style="left:23.4px;top:64.4px;font-size:7.25px;line-height:9px;color:#3a3a3a;">Только растения: Да</div>
<div class="t hd" style="left:23.10px;top:81.50px;width:163.60px;height:9.00px;">Культура</div>
<div class="t hd b" style="left:189.10px;top:81.50px;width:104.10px;height:9.00px;">На начало периода</div>
<div class="t hd b" style="left:295.60px;top:81.50px;width:183.20px;height:9.00px;">За период</div>
<div class="t hd b" style="left:481.20px;top:81.50px;width:234.50px;height:9.00px;">На конец периода</div>
<div class="t hd b" style="left:718.10px;top:81.50px;width:202.50px;height:9.00px;">Растения в посадках</div>
<div class="t hd" style="left:923.00px;top:81.50px;width:55.60px;height:9.00px;">К обеспечению</div>
<div class="t hd" style="left:23.10px;top:91.10px;width:100.10px;height:9.00px;">Номенклатура</div>
<div class="t hd" style="left:125.60px;top:91.10px;width:61.10px;height:9.00px;">Характеристика</div>
<div class="t hd" style="left:189.10px;top:91.10px;width:51.10px;height:9.00px;">Заказано</div>
<div class="t hd" style="left:242.60px;top:91.10px;width:50.60px;height:9.00px;">Заказано, руб.</div>
<div class="t hd" style="left:295.60px;top:91.10px;width:34.60px;height:9.00px;">Заказано</div>
<div class="t hd" style="left:332.60px;top:91.10px;width:33.40px;height:9.00px;">Заказано, руб.</div>
<div class="t hd" style="left:370.00px;top:91.10px;width:45.80px;height:9.00px;">Выпущено (посадка)</div>
<div class="t hd" style="left:418.20px;top:91.10px;width:29.40px;height:9.00px;">Реализовано</div>
<div class="t hd" style="left:450.00px;top:91.10px;width:28.80px;height:9.00px;">Реализовано, руб.</div>
<div class="t hd" style="left:481.20px;top:91.10px;width:50.40px;height:9.00px;">Заказано</div>
<div class="t hd" style="left:534.00px;top:91.10px;width:53.80px;height:9.00px;">Заказано, руб.</div>
<div class="t hd" style="left:718.10px;top:91.10px;width:36.70px;height:9.00px;">Остаток на начало</div>
<div class="t hd" style="left:757.20px;top:91.10px;width:32.40px;height:9.00px;">Посадка</div>
<div class="t hd" style="left:792.00px;top:91.10px;width:40.80px;height:9.00px;">Пересадка</div>
<div class="t hd" style="left:835.20px;top:91.10px;width:44.60px;height:9.00px;">Списание, выбытие</div>
<div class="t hd" style="left:882.20px;top:91.10px;width:38.40px;height:9.00px;">Остаток, конец</div>
<div class="t hd b" style="left:590.20px;top:91.10px;width:125.50px;height:9.00px;">Зарезервировано</div>
<div class="t hd" style="left:590.20px;top:100.10px;width:37.00px;height:9.00px;">Растения</div>
<div class="t hd" style="left:629.60px;top:100.10px;width:47.20px;height:9.00px;">Оперативный</div>
<div class="t hd" style="left:679.20px;top:100.10px;width:36.50px;height:9.00px;">Всего</div>
<div class="t d" style="left:28.80px;top:109.65px;width:94.80px;height:9.00px;">Сосна # горная Pinus mugo</div>
<div class="t d" style="left:125.60px;top:109.65px;width:61.60px;height:9.00px;">Корневая система</div>
<div class="t d r" style="left:188.50px;top:109.65px;width:50.90px;height:9.00px;">48,000</div>
<div class="t d r" style="left:242.00px;top:109.65px;width:50.40px;height:9.00px;">32 360,00</div>
<div class="t d r" style="left:480.60px;top:109.65px;width:50.20px;height:9.00px;">48,000</div>
<div class="t d r" style="left:533.40px;top:109.65px;width:53.60px;height:9.00px;">32 360,00</div>
<div class="t d r" style="left:589.60px;top:109.65px;width:36.80px;height:9.00px;">10,000</div>
<div class="t d r" style="left:629.00px;top:109.65px;width:47.00px;height:9.00px;">20,000</div>
<div class="t d r" style="left:678.60px;top:109.65px;width:36.30px;height:9.00px;">30,000</div>
<div class="t d r" style="left:717.50px;top:109.65px;width:36.50px;height:9.00px;">75,00</div>
<div class="t d r" style="left:881.60px;top:109.65px;width:38.20px;height:9.00px;">75,00</div>
<div class="t d r" style="left:922.40px;top:109.65px;width:55.40px;height:9.00px;">18,000</div>
<div class="t d" style="left:28.80px;top:119.09px;width:94.80px;height:9.00px;">Сосна горная Pinus mugo M</div>
<div class="t d" style="left:125.60px;top:119.09px;width:61.60px;height:9.00px;">Корневая система</div>
<div class="t d r" style="left:188.50px;top:119.09px;width:50.90px;height:9.00px;">1,000</div>
<div class="t d r" style="left:480.60px;top:119.09px;width:50.20px;height:9.00px;">1,000</div>
<div class="t d r" style="left:629.00px;top:119.09px;width:47.00px;height:9.00px;">1,000</div>
<div class="t d r" style="left:678.60px;top:119.09px;width:36.30px;height:9.00px;">1,000</div>
<div class="t d r" style="left:717.50px;top:119.09px;width:36.50px;height:9.00px;">50,00</div>
<div class="t d r" style="left:881.60px;top:119.09px;width:38.20px;height:9.00px;">50,00</div>
<div class="t g" style="left:23.20px;top:128.52px;width:164.00px;height:9.00px;">Сосна обыкновенная</div>
<div class="t d r" style="left:188.50px;top:128.52px;width:50.90px;height:9.00px;">350 000,000</div>
<div class="t d r" style="left:242.00px;top:128.52px;width:50.40px;height:9.00px;">4 410 000,00</div>
<div class="t d r" style="left:480.60px;top:128.52px;width:50.20px;height:9.00px;">350 000,000</div>
<div class="t d r" style="left:533.40px;top:128.52px;width:53.60px;height:9.00px;">4 410 000,00</div>
<div class="t d r" style="left:717.50px;top:128.52px;width:36.50px;height:9.00px;">100,00</div>
<div class="t d r" style="left:881.60px;top:128.52px;width:38.20px;height:9.00px;">100,00</div>
<div class="t g" style="left:23.20px;top:137.96px;width:164.00px;height:9.00px;">Сосна черная Pinus nigra</div>
<div class="t d r" style="left:188.50px;top:137.96px;width:50.90px;height:9.00px;">30,000</div>
<div class="t d r" style="left:242.00px;top:137.96px;width:50.40px;height:9.00px;">10 000,00</div>
<div class="t d r" style="left:480.60px;top:137.96px;width:50.20px;height:9.00px;">30,000</div>
<div class="t d r" style="left:533.40px;top:137.96px;width:53.60px;height:9.00px;">10 000,00</div>
<div class="t d r" style="left:629.00px;top:137.96px;width:47.00px;height:9.00px;">10,000</div>
<div class="t d r" style="left:678.60px;top:137.96px;width:36.30px;height:9.00px;">10,000</div>
<div class="t d r" style="left:717.50px;top:137.96px;width:36.50px;height:9.00px;">76,00</div>
<div class="t d r" style="left:881.60px;top:137.96px;width:38.20px;height:9.00px;">76,00</div>
<div class="t d" style="left:28.80px;top:147.39px;width:94.80px;height:9.00px;">Сосна черная Pinus nigra</div>
<div class="t d" style="left:125.60px;top:147.39px;width:61.60px;height:9.00px;">Корневая система</div>
<div class="t d r" style="left:188.50px;top:147.39px;width:50.90px;height:9.00px;">30,000</div>
<div class="t d r" style="left:242.00px;top:147.39px;width:50.40px;height:9.00px;">10 000,00</div>
<div class="t d r" style="left:480.60px;top:147.39px;width:50.20px;height:9.00px;">30,000</div>
<div class="t d r" style="left:533.40px;top:147.39px;width:53.60px;height:9.00px;">10 000,00</div>
<div class="t d r" style="left:629.00px;top:147.39px;width:47.00px;height:9.00px;">10,000</div>
<div class="t d r" style="left:678.60px;top:147.39px;width:36.30px;height:9.00px;">10,000</div>
<div class="t d r" style="left:717.50px;top:147.39px;width:36.50px;height:9.00px;">76,00</div>
<div class="t d r" style="left:881.60px;top:147.39px;width:38.20px;height:9.00px;">76,00</div>
<div class="t d r" style="left:922.40px;top:147.39px;width:55.40px;height:9.00px;">20,000</div>
<div class="t g" style="left:23.20px;top:156.83px;width:164.00px;height:9.00px;">Спирея многолетняя</div>
<div class="t d r" style="left:188.50px;top:156.83px;width:50.90px;height:9.00px;">56,000</div>
<div class="t d r" style="left:242.00px;top:156.83px;width:50.40px;height:9.00px;">690,00</div>
<div class="t d r" style="left:480.60px;top:156.83px;width:50.20px;height:9.00px;">56,000</div>
<div class="t d r" style="left:533.40px;top:156.83px;width:53.60px;height:9.00px;">690,00</div>
<div class="t d r" style="left:629.00px;top:156.83px;width:47.00px;height:9.00px;">22,000</div>
<div class="t d r" style="left:678.60px;top:156.83px;width:36.30px;height:9.00px;">25,000</div>
<div class="t d r" style="left:717.50px;top:156.83px;width:36.50px;height:9.00px;">812,00</div>
<div class="t d r" style="left:881.60px;top:156.83px;width:38.20px;height:9.00px;">812,00</div>
<div class="t d" style="left:28.80px;top:166.27px;width:94.80px;height:9.00px;">Спирея японская "Голден П</div>
<div class="t d" style="left:125.60px;top:166.27px;width:61.60px;height:9.00px;"></div>
<div class="t d r" style="left:188.50px;top:166.27px;width:50.90px;height:9.00px;">56,000</div>
<div class="t d r" style="left:242.00px;top:166.27px;width:50.40px;height:9.00px;">690,00</div>
<div class="t d r" style="left:480.60px;top:166.27px;width:50.20px;height:9.00px;">56,000</div>
<div class="t d r" style="left:533.40px;top:166.27px;width:53.60px;height:9.00px;">690,00</div>
<div class="t d r" style="left:629.00px;top:166.27px;width:47.00px;height:9.00px;">22,000</div>
<div class="t d r" style="left:678.60px;top:166.27px;width:36.30px;height:9.00px;">25,000</div>
<div class="t d r" style="left:717.50px;top:166.27px;width:36.50px;height:9.00px;">812,00</div>
<div class="t d r" style="left:881.60px;top:166.27px;width:38.20px;height:9.00px;">812,00</div>
<div class="t d r" style="left:922.40px;top:166.27px;width:55.40px;height:9.00px;">31,000</div>
<div class="t g" style="left:23.20px;top:175.70px;width:164.00px;height:9.00px;">Томаты "Пуговка" Росток</div>
<div class="t d r" style="left:242.00px;top:175.70px;width:50.40px;height:9.00px;">4 145,00</div>
<div class="t d r" style="left:533.40px;top:175.70px;width:53.60px;height:9.00px;">4 145,00</div>
<div class="t d" style="left:28.80px;top:185.14px;width:94.80px;height:9.00px;">Томаты "Пуговка" Росток Тип</div>
<div class="t d" style="left:125.60px;top:185.14px;width:61.60px;height:9.00px;">Тип кассеты: 100 я</div>
<div class="t d r" style="left:242.00px;top:185.14px;width:50.40px;height:9.00px;">20,00</div>
<div class="t d r" style="left:533.40px;top:185.14px;width:53.60px;height:9.00px;">20,00</div>
<div class="t d" style="left:28.80px;top:194.57px;width:94.80px;height:9.00px;">Томаты "Пуговка" Росток Тип</div>
<div class="t d" style="left:125.60px;top:194.57px;width:61.60px;height:9.00px;">Тип кассеты: 90 яч</div>
<div class="t d r" style="left:242.00px;top:194.57px;width:50.40px;height:9.00px;">4 125,00</div>
<div class="t d r" style="left:533.40px;top:194.57px;width:53.60px;height:9.00px;">4 125,00</div>
<div class="t g" style="left:23.20px;top:204.01px;width:164.00px;height:9.00px;">Туя западная  Смарагд</div>
<div class="t d r" style="left:188.50px;top:204.01px;width:50.90px;height:9.00px;">1,000</div>
<div class="t d r" style="left:480.60px;top:204.01px;width:50.20px;height:9.00px;">1,000</div>
<div class="t d r" style="left:717.50px;top:204.01px;width:36.50px;height:9.00px;">1 000,00</div>
<div class="t d r" style="left:881.60px;top:204.01px;width:38.20px;height:9.00px;">1 000,00</div>
<div class="t d" style="left:28.80px;top:213.45px;width:94.80px;height:9.00px;">Туя западная  Смарагд Р9; 1</div>
<div class="t d" style="left:125.60px;top:213.45px;width:61.60px;height:9.00px;">Р9; 10-20</div>
<div class="t d r" style="left:188.50px;top:213.45px;width:50.90px;height:9.00px;">1,000</div>
<div class="t d r" style="left:480.60px;top:213.45px;width:50.20px;height:9.00px;">1,000</div>
<div class="t d r" style="left:717.50px;top:213.45px;width:36.50px;height:9.00px;">1 000,00</div>
<div class="t d r" style="left:881.60px;top:213.45px;width:38.20px;height:9.00px;">1 000,00</div>
<div class="t d r" style="left:922.40px;top:213.45px;width:55.40px;height:9.00px;">1,000</div>
<div class="t g" style="left:23.20px;top:222.88px;width:164.00px;height:9.00px;">Туя западная Globosa (Thuja occidentalis Globosa</div>
<div class="t d r" style="left:188.50px;top:222.88px;width:50.90px;height:9.00px;">10,000</div>
<div class="t d r" style="left:242.00px;top:222.88px;width:50.40px;height:9.00px;">10 298,00</div>
<div class="t d r" style="left:480.60px;top:222.88px;width:50.20px;height:9.00px;">10,000</div>
<div class="t d r" style="left:533.40px;top:222.88px;width:53.60px;height:9.00px;">10 298,00</div>
<div class="t d r" style="left:589.60px;top:222.88px;width:36.80px;height:9.00px;">10,000</div>
<div class="t d r" style="left:629.00px;top:222.88px;width:47.00px;height:9.00px;">1,000</div>
<div class="t d r" style="left:678.60px;top:222.88px;width:36.30px;height:9.00px;">11,000</div>
<div class="t d r" style="left:717.50px;top:222.88px;width:36.50px;height:9.00px;">47,00</div>
<div class="t d r" style="left:881.60px;top:222.88px;width:38.20px;height:9.00px;">47,00</div>
<div class="t d" style="left:28.80px;top:232.32px;width:94.80px;height:9.00px;">Туя западная Globosa (Thuja</div>
<div class="t d" style="left:125.60px;top:232.32px;width:61.60px;height:9.00px;">С3</div>
<div class="t d r" style="left:188.50px;top:232.32px;width:50.90px;height:9.00px;">5,000</div>
<div class="t d r" style="left:242.00px;top:232.32px;width:50.40px;height:9.00px;">2 250,00</div>
<div class="t d r" style="left:480.60px;top:232.32px;width:50.20px;height:9.00px;">5,000</div>
<div class="t d r" style="left:533.40px;top:232.32px;width:53.60px;height:9.00px;">2 250,00</div>
<div class="t d r" style="left:589.60px;top:232.32px;width:36.80px;height:9.00px;">5,000</div>
<div class="t d r" style="left:678.60px;top:232.32px;width:36.30px;height:9.00px;">5,000</div>
<div class="t d r" style="left:717.50px;top:232.32px;width:36.50px;height:9.00px;">20,00</div>
<div class="t d r" style="left:881.60px;top:232.32px;width:38.20px;height:9.00px;">20,00</div>
<div class="t g" style="left:23.20px;top:241.75px;width:164.00px;height:9.00px;">Туя западная Thuja occidentalis  Golden Brabant</div>
<div class="t d r" style="left:188.50px;top:241.75px;width:50.90px;height:9.00px;">69,000</div>
<div class="t d r" style="left:242.00px;top:241.75px;width:50.40px;height:9.00px;">59 400,00</div>
<div class="t d r" style="left:480.60px;top:241.75px;width:50.20px;height:9.00px;">69,000</div>
<div class="t d r" style="left:533.40px;top:241.75px;width:53.60px;height:9.00px;">59 400,00</div>
<div class="t d r" style="left:589.60px;top:241.75px;width:36.80px;height:9.00px;">22,000</div>
<div class="t d r" style="left:678.60px;top:241.75px;width:36.30px;height:9.00px;">22,000</div>
<div class="t d r" style="left:717.50px;top:241.75px;width:36.50px;height:9.00px;">405,00</div>
<div class="t d r" style="left:881.60px;top:241.75px;width:38.20px;height:9.00px;">405,00</div>
<div class="t d" style="left:28.80px;top:251.19px;width:94.80px;height:9.00px;">Туя # западная Thuja occidei</div>
<div class="t d" style="left:125.60px;top:251.19px;width:61.60px;height:9.00px;">Корневая система</div>
<div class="t d r" style="left:188.50px;top:251.19px;width:50.90px;height:9.00px;">64,000</div>
<div class="t d r" style="left:242.00px;top:251.19px;width:50.40px;height:9.00px;">59 400,00</div>
<div class="t d r" style="left:480.60px;top:251.19px;width:50.20px;height:9.00px;">64,000</div>
<div class="t d r" style="left:533.40px;top:251.19px;width:53.60px;height:9.00px;">59 400,00</div>
<div class="t d r" style="left:589.60px;top:251.19px;width:36.80px;height:9.00px;">22,000</div>
<div class="t d r" style="left:678.60px;top:251.19px;width:36.30px;height:9.00px;">22,000</div>
<div class="t d r" style="left:717.50px;top:251.19px;width:36.50px;height:9.00px;">330,00</div>
<div class="t d r" style="left:881.60px;top:251.19px;width:38.20px;height:9.00px;">330,00</div>
<div class="t d r" style="left:922.40px;top:251.19px;width:55.40px;height:9.00px;">42,000</div>
<div class="t d" style="left:28.80px;top:260.63px;width:94.80px;height:9.00px;">Туя западная Thuja occidenti</div>
<div class="t d" style="left:125.60px;top:260.63px;width:61.60px;height:9.00px;">Корневая система</div>
<div class="t d r" style="left:188.50px;top:260.63px;width:50.90px;height:9.00px;">5,000</div>
<div class="t d r" style="left:480.60px;top:260.63px;width:50.20px;height:9.00px;">5,000</div>
<div class="t d r" style="left:717.50px;top:260.63px;width:36.50px;height:9.00px;">75,00</div>
<div class="t d r" style="left:881.60px;top:260.63px;width:38.20px;height:9.00px;">75,00</div>
<div class="t d r" style="left:922.40px;top:260.63px;width:55.40px;height:9.00px;">5,000</div>
<div class="t g" style="left:23.20px;top:270.06px;width:164.00px;height:9.00px;">Туя западная Thuja occidentalis  Golden Globe</div>
<div class="t d r" style="left:188.50px;top:270.06px;width:50.90px;height:9.00px;">6 473,000</div>
<div class="t d r" style="left:242.00px;top:270.06px;width:50.40px;height:9.00px;">67 088,00</div>
<div class="t d r" style="left:480.60px;top:270.06px;width:50.20px;height:9.00px;">6 473,000</div>
<div class="t d r" style="left:533.40px;top:270.06px;width:53.60px;height:9.00px;">67 088,00</div>
<div class="t d r" style="left:589.60px;top:270.06px;width:36.80px;height:9.00px;">5 159,000</div>
<div class="t d r" style="left:629.00px;top:270.06px;width:47.00px;height:9.00px;">200,000</div>
<div class="t d r" style="left:678.60px;top:270.06px;width:36.30px;height:9.00px;">5 459,000</div>
<div class="t d r" style="left:717.50px;top:270.06px;width:36.50px;height:9.00px;">61 490,00</div>
<div class="t d r" style="left:881.60px;top:270.06px;width:38.20px;height:9.00px;">61 490,00</div>
<div class="t d" style="left:28.80px;top:279.50px;width:94.80px;height:9.00px;">Туя # западная Thuja occidei</div>
<div class="t d" style="left:125.60px;top:279.50px;width:61.60px;height:9.00px;">Корневая система</div>
<div class="t d r" style="left:188.50px;top:279.50px;width:50.90px;height:9.00px;">31,000</div>
<div class="t d r" style="left:242.00px;top:279.50px;width:50.40px;height:9.00px;">18 400,00</div>
<div class="t d r" style="left:480.60px;top:279.50px;width:50.20px;height:9.00px;">31,000</div>
<div class="t d r" style="left:533.40px;top:279.50px;width:53.60px;height:9.00px;">18 400,00</div>
<div class="t d r" style="left:589.60px;top:279.50px;width:36.80px;height:9.00px;">23,000</div>
<div class="t d r" style="left:678.60px;top:279.50px;width:36.30px;height:9.00px;">23,000</div>
<div class="t d r" style="left:717.50px;top:279.50px;width:36.50px;height:9.00px;">150,00</div>
<div class="t d r" style="left:881.60px;top:279.50px;width:38.20px;height:9.00px;">150,00</div>
<div class="t d r" style="left:922.40px;top:279.50px;width:55.40px;height:9.00px;">8,000</div>
<div class="t d" style="left:28.80px;top:288.93px;width:94.80px;height:9.00px;">Туя западная Thuja occidenti</div>
<div class="t d" style="left:125.60px;top:288.93px;width:61.60px;height:9.00px;">Р9; 10-20</div>
<div class="t d r" style="left:188.50px;top:288.93px;width:50.90px;height:9.00px;">6 200,000</div>
<div class="t d r" style="left:242.00px;top:288.93px;width:50.40px;height:9.00px;">45 000,00</div>
<div class="t d r" style="left:480.60px;top:288.93px;width:50.20px;height:9.00px;">6 200,000</div>
<div class="t d r" style="left:533.40px;top:288.93px;width:53.60px;height:9.00px;">45 000,00</div>
<div class="t d r" style="left:589.60px;top:288.93px;width:36.80px;height:9.00px;">5 100,000</div>
<div class="t d r" style="left:678.60px;top:288.93px;width:36.30px;height:9.00px;">5 200,000</div>
<div class="t d r" style="left:717.50px;top:288.93px;width:36.50px;height:9.00px;">2 400,00</div>
<div class="t d r" style="left:881.60px;top:288.93px;width:38.20px;height:9.00px;">2 400,00</div>
<div class="t d r" style="left:922.40px;top:288.93px;width:55.40px;height:9.00px;">1 000,000</div>
<div class="t d" style="left:28.80px;top:298.37px;width:94.80px;height:9.00px;">Туя западная Thuja occidenti</div>
<div class="t d" style="left:125.60px;top:298.37px;width:61.60px;height:9.00px;">ОКС; 100</div>
<div class="t d r" style="left:188.50px;top:298.37px;width:50.90px;height:9.00px;">242,000</div>
<div class="t d r" style="left:242.00px;top:298.37px;width:50.40px;height:9.00px;">3 688,00</div>
<div class="t d r" style="left:480.60px;top:298.37px;width:50.20px;height:9.00px;">242,000</div>
<div class="t d r" style="left:533.40px;top:298.37px;width:53.60px;height:9.00px;">3 688,00</div>
<div class="t d r" style="left:589.60px;top:298.37px;width:36.80px;height:9.00px;">36,000</div>
<div class="t d r" style="left:629.00px;top:298.37px;width:47.00px;height:9.00px;">200,000</div>
<div class="t d r" style="left:678.60px;top:298.37px;width:36.30px;height:9.00px;">236,000</div>
<div class="t d r" style="left:717.50px;top:298.37px;width:36.50px;height:9.00px;">58 940,00</div>
<div class="t d r" style="left:881.60px;top:298.37px;width:38.20px;height:9.00px;">58 940,00</div>
<div class="t d r" style="left:922.40px;top:298.37px;width:55.40px;height:9.00px;">6,000</div>
<div class="t g" style="left:23.20px;top:307.81px;width:164.00px;height:9.00px;">Шалфей</div>
<div class="t d r" style="left:188.50px;top:307.81px;width:50.90px;height:9.00px;">392,000</div>
<div class="t d r" style="left:242.00px;top:307.81px;width:50.40px;height:9.00px;">40 500,00</div>
<div class="t d r" style="left:480.60px;top:307.81px;width:50.20px;height:9.00px;">392,000</div>
<div class="t d r" style="left:533.40px;top:307.81px;width:53.60px;height:9.00px;">40 500,00</div>
<div class="t d r" style="left:589.60px;top:307.81px;width:36.80px;height:9.00px;">2,000</div>
<div class="t d r" style="left:678.60px;top:307.81px;width:36.30px;height:9.00px;">12,000</div>
<div class="t d r" style="left:717.50px;top:307.81px;width:36.50px;height:9.00px;">4 348,00</div>
<div class="t d r" style="left:881.60px;top:307.81px;width:38.20px;height:9.00px;">4 348,00</div>
<div class="t d" style="left:28.80px;top:317.24px;width:94.80px;height:9.00px;">Шалфей Р9; 1</div>
<div class="t d" style="left:125.60px;top:317.24px;width:61.60px;height:9.00px;">Р9; 1</div>
<div class="t d r" style="left:188.50px;top:317.24px;width:50.90px;height:9.00px;">2,000</div>
<div class="t d r" style="left:480.60px;top:317.24px;width:50.20px;height:9.00px;">2,000</div>
<div class="t d r" style="left:589.60px;top:317.24px;width:36.80px;height:9.00px;">2,000</div>
<div class="t d r" style="left:678.60px;top:317.24px;width:36.30px;height:9.00px;">2,000</div>
<div class="t d r" style="left:717.50px;top:317.24px;width:36.50px;height:9.00px;">20,00</div>
<div class="t d r" style="left:881.60px;top:317.24px;width:38.20px;height:9.00px;">20,00</div>
<div class="t d" style="left:28.80px;top:326.68px;width:94.80px;height:9.00px;">Шалфей Корневая система:</div>
<div class="t d" style="left:125.60px;top:326.68px;width:61.60px;height:9.00px;">Корневая система</div>
<div class="t d r" style="left:188.50px;top:326.68px;width:50.90px;height:9.00px;">390,000</div>
<div class="t d r" style="left:242.00px;top:326.68px;width:50.40px;height:9.00px;">40 500,00</div>
<div class="t d r" style="left:480.60px;top:326.68px;width:50.20px;height:9.00px;">390,000</div>
<div class="t d r" style="left:533.40px;top:326.68px;width:53.60px;height:9.00px;">40 500,00</div>
<div class="t d r" style="left:678.60px;top:326.68px;width:36.30px;height:9.00px;">10,000</div>
<div class="t d r" style="left:717.50px;top:326.68px;width:36.50px;height:9.00px;">4 328,00</div>
<div class="t d r" style="left:881.60px;top:326.68px;width:38.20px;height:9.00px;">4 328,00</div>
<div class="t d r" style="left:922.40px;top:326.68px;width:55.40px;height:9.00px;">380,000</div>
<div class="t g b" style="left:23.20px;top:336.11px;width:164.00px;height:9.00px;">Итого</div>
<div class="t d r" style="left:188.50px;top:336.11px;width:50.90px;height:9.00px;">2 704 438,000</div>
<div class="t d r" style="left:242.00px;top:336.11px;width:50.40px;height:9.00px;">15 236 013,40</div>
<div class="t d r" style="left:480.60px;top:336.11px;width:50.20px;height:9.00px;">2 704 438,000</div>
<div class="t d r" style="left:533.40px;top:336.11px;width:53.60px;height:9.00px;">15 236 013,40</div>
<div class="t d r" style="left:589.60px;top:336.11px;width:36.80px;height:9.00px;">9 045,000</div>
<div class="t d r" style="left:629.00px;top:336.11px;width:47.00px;height:9.00px;">276,000</div>
<div class="t d r" style="left:678.60px;top:336.11px;width:36.30px;height:9.00px;">9 435,000</div>
<div class="t d r" style="left:717.50px;top:336.11px;width:36.50px;height:9.00px;">90 734,00</div>
<div class="t d r" style="left:881.60px;top:336.11px;width:38.20px;height:9.00px;">90 734,00</div>
</body></html>
